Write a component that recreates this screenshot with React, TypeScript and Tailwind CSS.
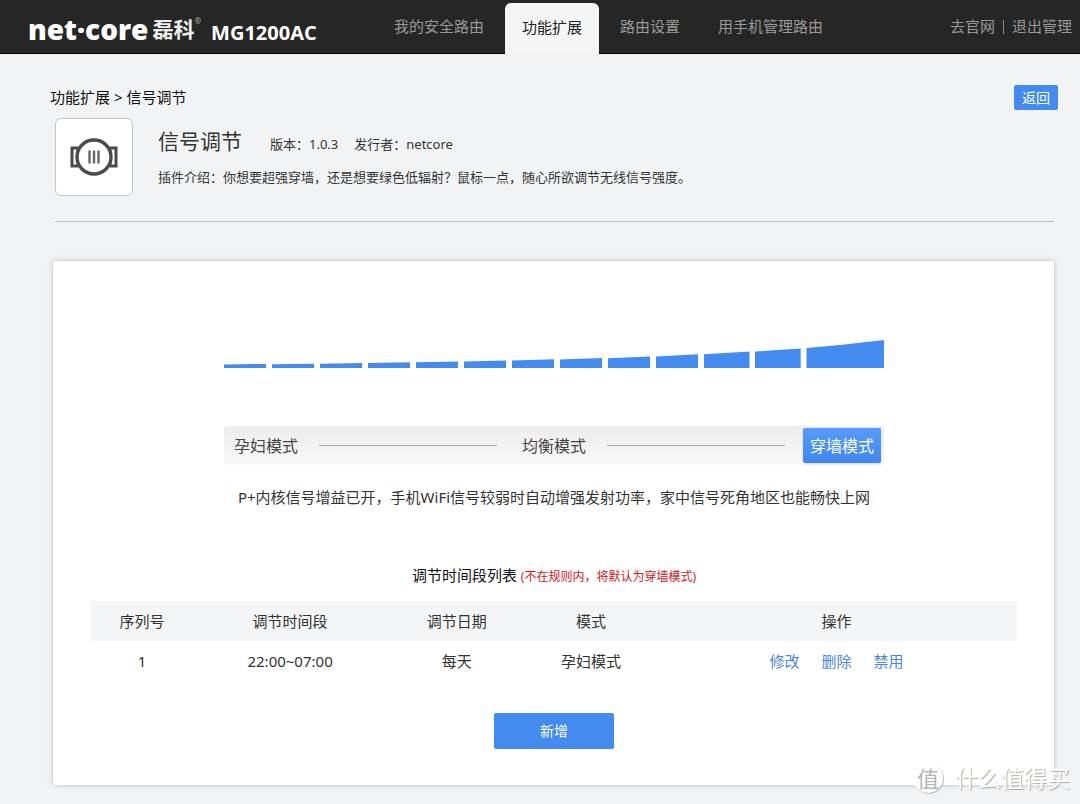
import { useState } from 'react';
import clsx from 'clsx';

interface Rule {
  id: number;
  time: string;
  date: string;
  mode: string;
}

const navItems = ['我的安全路由', '功能扩展', '路由设置', '用手机管理路由'];
const modes = ['孕妇模式', '均衡模式', '穿墙模式'];
const rules: Rule[] = [{ id: 1, time: '22:00~07:00', date: '每天', mode: '孕妇模式' }];
const rowActions = ['修改', '删除', '禁用'];

function Header() {
  return (
    <header className="flex h-[54px] items-stretch border-b border-black bg-[#262626] text-[15px] text-[#999]">
      <div className="flex w-[377px] shrink-0 items-center pt-1 pl-7 text-white">
        <span className="font-['Open_Sans'] text-[28px] leading-8 font-extrabold">net·core</span>
        <span className="ml-1 text-[21px] leading-8 font-bold text-[#eee]">磊科</span>
        <sup className="-mt-2 text-[8px] leading-none text-[#aaa]">®</sup>
        <span className="mt-2 ml-2.5 font-['Open_Sans'] text-xl leading-6 font-bold">MG1200AC</span>
      </div>
      <nav className="flex shrink-0 gap-1 pt-[3px]">
        {navItems.map((item) => (
          <a
            key={item}
            href="#"
            className={clsx(
              'flex items-center rounded-t-md px-[17px] pb-[3px]',
              item === '功能扩展' && 'relative -mb-px bg-[#f5f5f6] text-[#222]',
            )}
          >
            {item}
          </a>
        ))}
      </nav>
      <div className="ml-auto flex shrink-0 items-center gap-2 pr-2">
        <a href="#">去官网</a>
        <span className="h-3.5 w-px bg-[#888]" />
        <a href="#">退出管理</a>
      </div>
    </header>
  );
}

function PluginIcon() {
  return (
    <svg viewBox="0 0 48 38" className="h-[38px] w-12" fill="none" stroke="#4a4a4a">
      <path d="M8 10H2v18h6M40 10h6v18h-6" strokeWidth="3" />
      <path d="M7.500 10v18M40.500 10v18" strokeWidth="2" />
      <circle cx="24" cy="19" r="17" fill="#fff" strokeWidth="3.400" />
      <path d="M19.500 12.500v13M24 12.500v13M28.500 12.500v13" strokeWidth="2.400" stroke="#666" />
    </svg>
  );
}

// [left, right, top at left, top at right]
const bars = [
  [0, 42, 24.4, 24],
  [48, 90, 24.2, 23.7],
  [96, 138, 23.8, 23],
  [144, 186, 23, 22.3],
  [192, 234, 22.3, 21.5],
  [240, 282, 21.5, 20.5],
  [288, 330, 20.6, 19.3],
  [336, 378, 19.5, 18],
  [384, 426, 18.2, 16.5],
  [432, 474, 16.4, 14.3],
  [480, 525.500, 14.2, 11.6],
  [531, 576.700, 11.6, 8.400],
];

function SignalChart() {
  return (
    <svg viewBox="0 0 660 28" className="h-7 w-[660px]" fill="#438bef">
      {bars.map(([l, r, tl, tr]) => (
        <path key={l} d={`M${l} ${tl}L${r} ${tr}V28H${l}z`} />
      ))}
      <path d="M582.500 8Q620 5 660 0V28H582.500z" />
    </svg>
  );
}

function ModePicker() {
  const [active, setActive] = useState('穿墙模式');
  return (
    <div className="mt-[58px] flex h-[39px] w-[660px] items-center rounded-sm bg-gradient-to-b from-[#ededed] to-[#f8f8f8] px-[3px]">
      {modes.map((mode, i) => (
        <div key={mode} className={clsx('flex items-center', i > 0 && 'flex-1')}>
          {i > 0 && <span className="mr-[18px] ml-[14px] h-px flex-1 bg-[#a8a8a8]" />}
          <button
            type="button"
            aria-pressed={mode === active}
            onClick={() => setActive(mode)}
            className={clsx(
              'h-[35px] w-[78px] rounded-xs text-base',
              mode === active
                ? 'bg-gradient-to-b from-[#589bfa] to-[#3f86ee] text-white shadow'
                : 'text-[#444]',
            )}
          >
            {mode}
          </button>
        </div>
      ))}
    </div>
  );
}

function RuleTable() {
  return (
    <table className="mt-3.5 w-full table-fixed text-center text-[15px] text-[#333]">
      <colgroup>
        <col className="w-[11%]" />
        <col className="w-[21%]" />
        <col className="w-[15%]" />
        <col className="w-[14%]" />
        <col className="w-[39%]" />
      </colgroup>
      <thead>
        <tr className="h-10 bg-[#f4f5f7]">
          <th className="font-normal">序列号</th>
          <th className="font-normal">调节时间段</th>
          <th className="font-normal">调节日期</th>
          <th className="font-normal">模式</th>
          <th className="font-normal">操作</th>
        </tr>
      </thead>
      <tbody>
        {rules.map((rule) => (
          <tr key={rule.id} className="h-10">
            <td>{rule.id}</td>
            <td>{rule.time}</td>
            <td>{rule.date}</td>
            <td>{rule.mode}</td>
            <td>
              <div className="flex justify-center gap-[22px] text-[#4a86dd]">
                {rowActions.map((action) => (
                  <a key={action} href="#">
                    {action}
                  </a>
                ))}
              </div>
            </td>
          </tr>
        ))}
      </tbody>
    </table>
  );
}

function Watermark() {
  return (
    <div className="absolute right-2.5 bottom-2 flex items-center gap-3 text-white">
      <span className="flex size-[30px] items-center justify-center rounded-full bg-white text-[22px] text-[#b5b5b5] shadow-[1px_1px_1px_#bbb]">
        值
      </span>
      <span className="text-[23px] leading-9 [text-shadow:1px_1px_1px_#aaa]">什么值得买</span>
    </div>
  );
}

export default function App() {
  return (
    <div className="relative min-h-screen bg-[#f2f3f5] pb-[18px] font-['Noto_Sans','Noto_Sans_CJK_SC',sans-serif] text-[#333]">
      <Header />
      <main>
        <div className="flex items-start justify-between pt-[31px] pr-[22px] pl-[50px]">
          <div className="text-[15px] leading-6 text-[#111]">功能扩展 &gt; 信号调节</div>
          <button type="button" className="h-[25px] w-11 rounded-xs bg-[#438bef] text-sm text-white">
            返回
          </button>
        </div>

        <section className="mr-[26px] ml-[55px] flex gap-[25px] border-b border-[#bfc0c2] pt-2 pb-[25px]">
          <div className="flex size-[78px] shrink-0 items-center justify-center rounded-md border border-[#c4c5c8] bg-white">
            <PluginIcon />
          </div>
          <div>
            <div className="flex items-baseline pt-[7px] text-[13px]">
              <h1 className="text-[21px] leading-8">信号调节</h1>
              <span className="ml-7">版本：1.0.3</span>
              <span className="ml-4">发行者：netcore</span>
            </div>
            <p className="mt-2.5 text-[13px] leading-5">
              插件介绍：你想要超强穿墙，还是想要绿色低辐射？鼠标一点，随心所欲调节无线信号强度。
            </p>
          </div>
        </section>

        <section className="mt-[39px] mr-[26px] ml-[53px] flex flex-col items-center bg-white pt-[79px] pr-[37px] pb-9 pl-[38px] shadow-[0_0_5px_#bbb]">
          <SignalChart />
          <ModePicker />
          <p className="mt-5 text-[15px] leading-6">
            P+内核信号增益已开，手机WiFi信号较弱时自动增强发射功率，家中信号死角地区也能畅快上网
          </p>
          <h2 className="mt-[54px] text-[15px] leading-6 text-[#111]">
            调节时间段列表 <span className="text-xs text-[#d0161b]">(不在规则内，将默认为穿墙模式)</span>
          </h2>
          <RuleTable />
          <button type="button" className="mt-8 h-9 w-[120px] rounded-xs bg-[#438bef] text-sm text-white">
            新增
          </button>
        </section>
      </main>
      <Watermark />
    </div>
  );
}
